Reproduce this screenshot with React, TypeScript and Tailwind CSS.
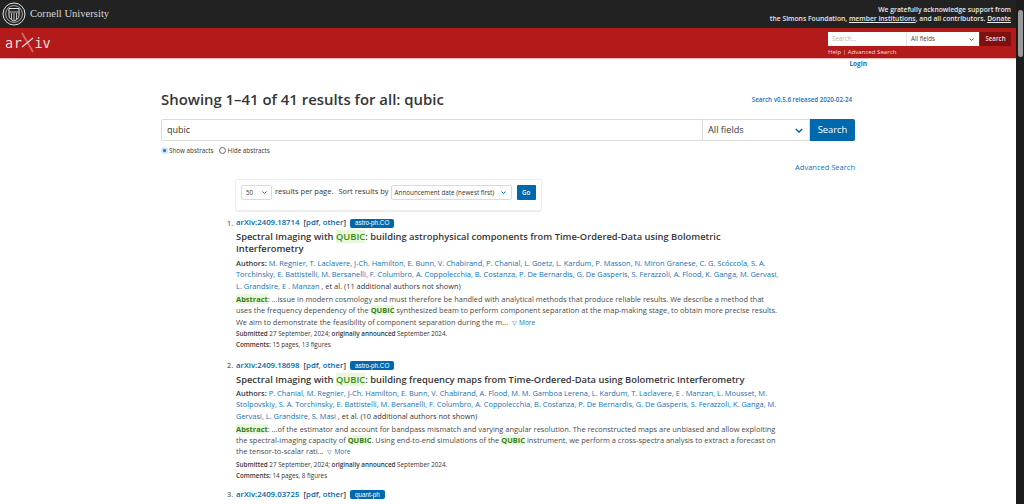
import React from "react";

const font = "font-['Open_Sans','Noto_Sans',sans-serif]";

const Chevron = ({ className }: { className: string }) => (
  <svg viewBox="0 0 10 6" className={className} fill="none" stroke="#0068ac" strokeWidth="1.8">
    <path d="M1 1l4 4 4-4" />
  </svg>
);

const Hl = ({ children }: { children: React.ReactNode }) => (
  <span className="bg-[#e8f8dc] text-[#3c8d0f]">{children}</span>
);

const HlB = () => <span className="bg-[#e8f8dc] font-bold text-[#3c7a1a]">QUBIC</span>;

const Meta = ({ date, comments }: { date: string; comments: string }) => (
  <>
    <p className="text-[6.3px] leading-[11.5px] text-[#363636]">
      <b className="font-semibold">Submitted</b> {date}; <b className="font-semibold">originally announced</b> September 2024.
    </p>
    <p className="text-[6.3px] leading-[11.5px] text-[#363636]">
      <b className="font-semibold">Comments:</b> {comments}
    </p>
  </>
);

const Head = ({ n, id, tag }: { n: number; id: string; tag: string }) => (
  <div className="flex h-[12px] items-center text-[7.8px] text-[#1772b5]">
    <span className="-ml-[9px] w-[9px] text-[7.2px] text-[#363636]">{n}.</span>
    <span className="font-semibold text-[#0068ac]">arXiv:{id}</span>
    <span className="ml-[4px] font-semibold text-[#0068ac]">
      <span className="text-[#363636]">[</span>pdf, other<span className="text-[#363636]">]</span>
    </span>
    <span className="ml-[4px] flex h-[9px] items-center rounded-[2px] bg-[#0068ac] px-[5px] font-['Liberation_Sans',sans-serif] text-[6.3px] text-white">
      {tag}
    </span>
  </div>
);

const authors1 = (
  <>
    <a>M. Regnier</a>, <a>T. Laclavere</a>, <a>J-Ch. Hamilton</a>, <a>E. Bunn</a>, <a>V. Chabirand</a>, <a>P. Chanial</a>, <a>L. Goetz</a>, <a>L. Kardum</a>, <a>P. Masson</a>, <a>N. Miron Granese</a>, <a>C. G. Scóccola</a>, <a>S. A.</a>
    <br />
    <a>Torchinsky</a>, <a>E. Battistelli</a>, <a>M. Bersanelli</a>, <a>F. Columbro</a>, <a>A. Coppolecchia</a>, <a>B. Costanza</a>, <a>P. De Bernardis</a>, <a>G. De Gasperis</a>, <a>S. Ferazzoli</a>, <a>A. Flood</a>, <a>K. Ganga</a>, <a>M. Gervasi</a>,
    <br />
    <a>L. Grandsire</a>, <a>E . Manzan</a> <span className="text-[#363636]">, et al. (11 additional authors not shown)</span>
  </>
);

const authors2 = (
  <>
    <a>P. Chanial</a>, <a>M. Regnier</a>, <a>J-Ch. Hamilton</a>, <a>E. Bunn</a>, <a>V. Chabirand</a>, <a>A. Flood</a>, <a>M. M. Gamboa Lerena</a>, <a>L. Kardum</a>, <a>T. Laclavere</a>, <a>E . Manzan</a>, <a>L. Mousset</a>, <a>M.</a>
    <br />
    <a>Stolpovskiy</a>, <a>S. A. Torchinsky</a>, <a>E. Battistelli</a>, <a>M. Bersanelli</a>, <a>F. Columbro</a>, <a>A. Coppolecchia</a>, <a>B. Costanza</a>, <a>P. De Bernardis</a>, <a>G. De Gasperis</a>, <a>S. Ferazzoli</a>, <a>K. Ganga</a>, <a>M.</a>
    <br />
    <a>Gervasi</a>, <a>L. Grandsire</a>, <a>S. Masi</a> <span className="text-[#363636]">, et al. (10 additional authors not shown)</span>
  </>
);

const More = () => (
  <span className="text-[6.5px] text-[#1772b5]">
    <span className="mx-[2px] text-[6px]">▽</span>More
  </span>
);

export default function App() {
  return (
    <div className={`flex h-[504px] w-[1024px] overflow-hidden whitespace-nowrap bg-white ${font}`}>
      <div className="w-[1016px] shrink-0">
        {/* cornell strip */}
        <div className="flex h-[28px] items-start justify-between bg-[#222222] pr-[5px]">
          <div className="flex h-[28px] items-center pl-[2px]">
            <svg viewBox="0 0 24 24" className="h-[24px] w-[24px]" fill="none" stroke="#e6e6e6">
              <circle cx="12" cy="12" r="11" strokeWidth="1" />
              <circle cx="12" cy="12" r="8.4" strokeWidth="0.7" />
              <path d="M7 6.5h10v7c0 3-2.5 4.5-5 5.5-2.5-1-5-2.5-5-5.5z" strokeWidth="1" />
              <path d="M7.5 10h9M9.5 11v6M12 11v7M14.5 11v6" strokeWidth="0.8" />
            </svg>
            <span className="ml-[4px] font-['Liberation_Serif',serif] text-[10.6px] text-[#d9d9d9]">Cornell University</span>
          </div>
          <div className="pt-[5px] text-right text-[6.75px] font-semibold leading-[9px] text-[#e8e8e8]">
            <p>We gratefully acknowledge support from</p>
            <p>
              the Simons Foundation, <span className="underline">member institutions</span>, and all contributors. <span className="underline">Donate</span>
            </p>
          </div>
        </div>
        {/* red bar */}
        <div className="flex h-[31px] items-start justify-between border-b border-[#e9b9b9] bg-[#b31b1b]">
          <div className="ml-[5px] mt-[4px] flex h-[22px] items-center font-['DejaVu_Sans_Mono',monospace] text-[13.5px] text-[#f3dede]">
            <span className="tracking-[0.6px]">ar</span>
            <svg viewBox="0 0 14 22" className="-mx-[1px] h-[22px] w-[14px]" fill="none" strokeWidth="1.7">
              <path d="M1 1l11 19" stroke="#d96a6a" />
              <path d="M1 15l11-9" stroke="#f3dede" strokeWidth="1.2" />
            </svg>
            <span>iv</span>
          </div>
          <div className="mr-[5px] mt-[4px] w-[183px]">
            <div className="flex h-[14px]">
              <div className="flex w-[78px] items-center bg-white pl-[4px] text-[6.2px] text-[#b5b5b5]">Search...</div>
              <div className="flex w-[73px] items-center justify-between border-l border-[#e8e8e8] bg-white pl-[4px] pr-[5px] text-[6.2px] text-[#444]">
                All fields
                <Chevron className="h-[3px] w-[5px]" />
              </div>
              <div className="ml-[1px] flex w-[31px] items-center justify-center rounded-[1px] bg-[#7e1010] text-[6.2px] font-semibold text-[#f0dcdc]">Search</div>
            </div>
            <p className="mt-[1px] text-[6.1px] leading-[10px] text-[#f6dede]">Help | Advanced Search</p>
          </div>
        </div>
        <div className="h-[9px] w-[851px] text-right text-[6.5px] font-bold leading-[9px] text-[#1772b5]">
          <span className="mr-[-16px]">Login</span>
        </div>

        {/* content */}
        <div className="ml-[161px] w-[694px]">
          <div className="mt-[20px] flex h-[22px] items-start justify-between">
            <h1 className="text-[14.9px] font-semibold leading-[22px] text-[#363636]">Showing 1–41 of 41 results for all: qubic</h1>
            <span className="mr-[3px] mt-[7px] text-[6.2px] font-semibold leading-[10px] text-[#1772b5]">Search v0.5.6 released 2020-02-24</span>
          </div>
          <div className="mt-[9px] flex h-[22px]">
            <div className="flex w-[542px] items-center rounded-l-[2px] border border-[#dbdbdb] pl-[5px] text-[9px] text-[#363636]">qubic</div>
            <div className="flex w-[107px] items-center justify-between border-y border-r border-[#dbdbdb] pl-[5px] pr-[6px] text-[9.2px] text-[#363636]">
              All fields
              <Chevron className="h-[5px] w-[8px]" />
            </div>
            <div className="flex w-[45px] items-center justify-center rounded-r-[2px] bg-[#0068ac] text-[9.4px] text-white">Search</div>
          </div>
          <div className="mt-[5px] flex h-[9px] items-center text-[6.3px] text-[#363636]">
            <span className="h-[7px] w-[7px] rounded-full border-[2px] border-[#cfe3fb] bg-[#0b6fe0]" />
            <span className="ml-[1px]">Show abstracts</span>
            <span className="ml-[5px] h-[7px] w-[7px] rounded-full border border-[#666] bg-white" />
            <span className="ml-[2px]">Hide abstracts</span>
          </div>
          <div className="mt-[6px] h-[12px] text-right text-[7.5px] leading-[12px] text-[#1772b5]">Advanced Search</div>

          <div className="ml-[74px] mt-[6px] flex h-[32px] w-[307px] items-start rounded-[2px] border border-[#eeeeee] pl-[5px] pt-[5px] shadow-[0_1px_1px_rgba(0,0,0,0.08)]">
            <div className="flex h-[15px] w-[31px] items-center justify-between rounded-[2px] border border-[#dbdbdb] px-[4px] text-[6.2px] text-[#363636]">
              50
              <Chevron className="h-[3px] w-[5px]" />
            </div>
            <span className="ml-[3px] text-[7.5px] leading-[12px] text-[#363636]">results per page.</span>
            <span className="ml-[5px] text-[7.5px] leading-[12px] text-[#363636]">Sort results by</span>
            <div className="ml-[2px] flex h-[15px] w-[121px] items-center justify-between rounded-[2px] border border-[#dbdbdb] pl-[3px] pr-[5px] text-[6.3px] text-[#363636]">
              Announcement date (newest first)
              <Chevron className="h-[3px] w-[5px]" />
            </div>
            <div className="ml-[5px] flex h-[15px] w-[19px] items-center justify-center rounded-[1px] bg-[#0068ac] text-[6.2px] font-semibold text-white">Go</div>
          </div>

          <div className="ml-[75px] mt-[6px] w-[560px]">
            <Head n={1} id="2409.18714" tag="astro-ph.CO" />
            <h2 className="mt-[2px] text-[9.35px] font-semibold leading-[12px] text-[#363636]">
              Spectral Imaging with <Hl>QUBIC</Hl>: building astrophysical components from Time-Ordered-Data using Bolometric
              <br />
              Interferometry
            </h2>
            <p className="mt-[3px] text-[7.45px] leading-[11.4px] text-[#1772b5]">
              <b className="font-semibold text-[#363636]">Authors:</b> {authors1}
            </p>
            <p className="mt-[2px] text-[7.45px] leading-[11.2px] text-[#4a4a4a]">
              <span className="bg-[#e8f8dc] font-bold text-[#3c7a1a]">Abstract</span>: ...issue in modern cosmology and must therefore be handled with analytical methods that produce reliable results. We describe a method that
              <br />
              uses the frequency dependency of the <HlB /> synthesized beam to perform component separation at the map-making stage, to obtain more precise results.
              <br />
              We aim to demonstrate the feasibility of component separation during the m... <More />
            </p>
            <div className="-mt-[1px]">
              <Meta date="27 September, 2024" comments="15 pages, 13 figures" />
            </div>

            <div className="mt-[9px]">
              <Head n={2} id="2409.18698" tag="astro-ph.CO" />
            </div>
            <h2 className="mt-[2px] text-[9.35px] font-semibold leading-[12px] text-[#363636]">
              Spectral Imaging with <Hl>QUBIC</Hl>: building frequency maps from Time-Ordered-Data using Bolometric Interferometry
            </h2>
            <p className="mt-[2px] text-[7.45px] leading-[11.4px] text-[#1772b5]">
              <b className="font-semibold text-[#363636]">Authors:</b> {authors2}
            </p>
            <p className="mt-[2px] text-[7.45px] leading-[11.2px] text-[#4a4a4a]">
              <span className="bg-[#e8f8dc] font-bold text-[#3c7a1a]">Abstract</span>: ...of the estimator and account for bandpass mismatch and varying angular resolution. The reconstructed maps are unbiased and allow exploiting
              <br />
              the spectral-imaging capacity of <HlB />. Using end-to-end simulations of the <HlB /> instrument, we perform a cross-spectra analysis to extract a forecast on
              <br />
              the tensor-to-scalar rati... <More />
            </p>
            <Meta date="27 September, 2024" comments="14 pages, 8 figures" />

            <div className="mt-[7px]">
              <Head n={3} id="2409.03725" tag="quant-ph" />
            </div>
          </div>
        </div>
      </div>

      {/* scrollbar */}
      <div className="flex h-[504px] w-[8px] flex-col items-center bg-[#1c1c1c] pt-[10px]">
        <div className="h-[47px] w-[5px] rounded-full bg-[#9b9b9b]" />
      </div>
    </div>
  );
}
